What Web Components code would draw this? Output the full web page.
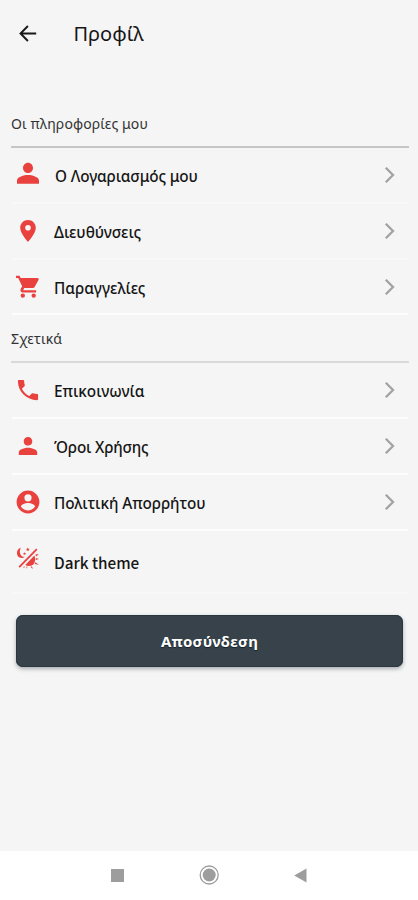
<!DOCTYPE html>
<html lang="el">
<head>
<meta charset="utf-8">
<title>Προφίλ</title>
<style>
body{margin:0;background:#f5f5f5;color:#161616;font-family:"Noto Sans","Open Sans",sans-serif}
</style>
</head>
<body>
<profile-screen></profile-screen>
<script>
const define = (name, html) => {
  const t = document.createElement('template');
  t.innerHTML = html;
  customElements.define(name, class extends HTMLElement {
    constructor() {
      super();
      this.attachShadow({mode: 'open'}).append(t.content.cloneNode(true));
    }
  });
};

const ICONS = {
  person: '<path d="M12 12c2.900 0 5-2.200 5-5S14.900 1.700 12 1.700 7 4.200 7 7s2.100 5 5 5zm0 2c-4 0-11 1.900-11 5.500v3.300h22v-3.300c0-3.600-7-5.500-11-5.500z"/>',
  small: '<path d="M12 11.600c2.400 0 4.300-1.900 4.300-4.200S14.400 3.100 12 3.100 7.700 5 7.700 7.400s1.900 4.200 4.300 4.200zm0 2.100c-3.200 0-9.200 1.600-9.200 4.600v2.700h18.400v-2.700c0-3-6-4.600-9.200-4.600z"/>',
  pin: '<path d="M12 1C7.600 1 4.200 4.500 4.200 8.800 4.200 14.600 12 23 12 23s7.800-8.400 7.800-14.200C19.800 4.500 16.400 1 12 1zm0 10.600a2.800 2.800 0 1 1 0-5.600 2.800 2.800 0 0 1 0 5.600z"/>',
  cart: '<path d="M6.800 18.400a2.200 2.200 0 1 0 0 4.400 2.200 2.200 0 0 0 0-4.400zM0 .8V3h2.200l4 8.300-1.500 2.700c-.9 1.600.3 3.500 2 3.500h13.400v-2.200H7.100l1.200-2.200h8.300c.8 0 1.600-.4 2-1.100L22.600 4.800c.4-.8-.2-1.700-1.100-1.700H4.600L3.600.8zm17.700 17.600a2.200 2.200 0 1 0 0 4.400 2.200 2.200 0 0 0 0-4.400z"/>',
  phone: '<path d="M5.900 10.700c1.600 3.200 4.200 5.800 7.400 7.400l2.500-2.500c.3-.3.800-.4 1.200-.3 1.300.4 2.600.7 4 .7.600 0 1.100.5 1.100 1.100v4c0 .6-.5 1.100-1.100 1.100C10.500 22.200 1.900 13.600 1.900 3.100 1.900 2.500 2.400 2 3 2h4c.6 0 1.100.5 1.100 1.100 0 1.400.2 2.700.7 4 .1.400 0 .9-.3 1.200z"/>',
  account: '<path d="M12 .6a11.400 11.400 0 1 0 0 22.800A11.400 11.400 0 0 0 12 .6zm0 3.600a3.600 3.600 0 1 1 0 7.200 3.600 3.600 0 0 1 0-7.200zm0 16.200c-2.900 0-5.400-1.500-7-3.700 0-2.300 4.700-3.600 7-3.600s7 1.300 7 3.600c-1.600 2.200-4.100 3.700-7 3.700z"/>',
  theme: '<path d="M4.800 1.800C.2 2.800-.4 9.600 3.600 11.500c1.700.8 3.800.6 5.100-.7-3.800.5-6.400-4.400-3.900-9z"/><path d="M8.500 6.200l.5.900 1 .2-.7.700.1 1-.9-.5-.9.500.2-1-.8-.7 1.100-.2zM11.800 1.500l.6 1.200 1.300.2-1 .9.200 1.300-1.100-.6-1.200.6.300-1.300-1-.9 1.300-.2z"/><path d="M20.800 3.200L3.200 21.200" stroke="currentColor" stroke-width="1.800"/><path d="M18.400 9.500L9.300 18.900c2.400 1.700 6.800 1.300 8.600-1.200 1.500-2.400 1.700-5.400.5-8.200z"/><path d="M19.300 8.500l3.400-.6-2.400 2.600zM20 12l3 1-3.300.9zM19.400 16.200l3.600 2.600-4.300-.8zM15.800 20.200l1.300 2.800-2.600-2zM10.500 20.500l1.200.3-1.300 2zM8.600 20l-.2 1.800L7 21.500z"/>'
};

customElements.define('ui-icon', class extends HTMLElement {
  constructor() {
    super();
    this.attachShadow({mode: 'open'});
  }
  connectedCallback() {
    this.shadowRoot.innerHTML = `<style>:host{display:block;width:24px;height:24px;color:#e9423e}svg{display:block}</style>
      <svg width="24" height="24" viewBox="0 0 24 24" fill="currentColor">${ICONS[this.getAttribute('name')]}</svg>`;
  }
});

define('app-header', `<style>
  :host{display:flex;align-items:center;height:68px;padding-left:19px;gap:36.500px;box-sizing:border-box}
  svg{display:block}
  .t{font-size:20px;line-height:28px}
</style>
<svg width="18" height="18" viewBox="0 0 18 18" fill="none" stroke="#181818" stroke-width="1.900"><path d="M17.200 8.500H1.800M8.900 1L1.500 8.500l7.400 7.500"/></svg>
<div class="t"><slot></slot></div>`);

define('section-title', `<style>
  :host{display:flex;align-items:flex-start;box-sizing:border-box;margin:0 9px 0 11px;font-size:14px;line-height:20px;color:#333;border-bottom:2px solid var(--rule,#c6c6c6)}
</style><slot></slot>`);

define('list-row', `<style>
  :host{display:flex;align-items:center;box-sizing:border-box;height:var(--h,56px);margin:0 10px 0 12px;padding:0 12px 0 4px;border-bottom:2px solid var(--line,#fdfdfd)}
  .icon{margin-bottom:var(--lift,0px)}
  .label{flex:1;margin-left:14px;padding-top:var(--drop,2px);font-size:15.300px;line-height:22px;font-weight:500}
  .chev{display:block}
  :host([plain]) .chev{display:none}
</style>
<div class="icon"><slot name="icon"></slot></div>
<div class="label"><slot></slot></div>
<svg class="chev" width="12" height="18" viewBox="0 0 12 18" fill="none" stroke="#a2a2a2" stroke-width="2.300"><path d="M1.800 1.800L9 9l-7.200 7.200"/></svg>`);

define('primary-button', `<style>
  :host{display:block;margin:21px 15px 0 16px}
  button{display:block;width:100%;height:52px;border:0;border-radius:7px;background:#37424a;color:#fff;font:700 15px/53px "Noto Sans",sans-serif;letter-spacing:.3px;padding:0;box-shadow:0 2px 4px rgba(40,55,65,.38),inset 0 0 0 1px #2b363e}
  span{text-shadow:0 1px 1px #17202a}
</style><button><span><slot></slot></span></button>`);

define('system-nav', `<style>
  :host{display:flex;justify-content:space-between;align-items:center;box-sizing:border-box;height:49px;padding:0 111px 1px 111px;background:#fff}
  svg{display:block}
</style>
<svg width="13" height="13"><path fill="#9d9d9d" d="M0 0h13v13H0z"/></svg>
<svg width="20" height="20" viewBox="0 0 20 20"><circle cx="10.200" cy="10" r="9" fill="none" stroke="#9d9d9d" stroke-width="1.300"/><circle cx="10.200" cy="10" r="6.500" fill="#9d9d9d"/></svg>
<svg width="13" height="15"><path fill="#9d9d9d" d="M12.500 .5v14L.2 7.500z"/></svg>`);

define('profile-screen', `<style>
  :host{display:flex;flex-direction:column;height:900px;background:#f5f5f5}
  main{flex:1}
  .s1{height:34px;margin-top:46px;letter-spacing:.12px}
  .s2{height:34px;margin-top:14px;--rule:#d9d9d9;letter-spacing:.12px}
  .en{font-family:"Noto Sans CJK JP",sans-serif}
</style>
<app-header><span>Προφίλ</span></app-header>
<main>
  <section-title class="s1"><span>Οι πληροφορίες μου</span></section-title>
  <list-row style="--line:#f8f8f8;--lift:4px"><ui-icon slot="icon" name="person"></ui-icon><span style="letter-spacing:-.1px;margin-left:1px">Ο Λογαριασμός μου</span></list-row>
  <list-row style="--line:#f8f8f8"><ui-icon slot="icon" name="pin"></ui-icon><span>Διευθύνσεις</span></list-row>
  <list-row style="--h:55px"><ui-icon slot="icon" name="cart"></ui-icon><span>Παραγγελίες</span></list-row>
  <section-title class="s2"><span>Σχετικά</span></section-title>
  <list-row><ui-icon slot="icon" name="phone"></ui-icon><span>Επικοινωνία</span></list-row>
  <list-row><ui-icon slot="icon" name="small"></ui-icon><span style="letter-spacing:-.2px">Όροι Χρήσης</span></list-row>
  <list-row><ui-icon slot="icon" name="account"></ui-icon><span style="letter-spacing:-.05px">Πολιτική Απορρήτου</span></list-row>
  <list-row plain style="--h:63px;--line:#f8f8f8;--lift:8px;--drop:2px"><ui-icon slot="icon" name="theme"></ui-icon><span class="en">Dark theme</span></list-row>
  <primary-button><span>Αποσύνδεση</span></primary-button>
</main>
<system-nav></system-nav>`);
</script>
</body>
</html>
